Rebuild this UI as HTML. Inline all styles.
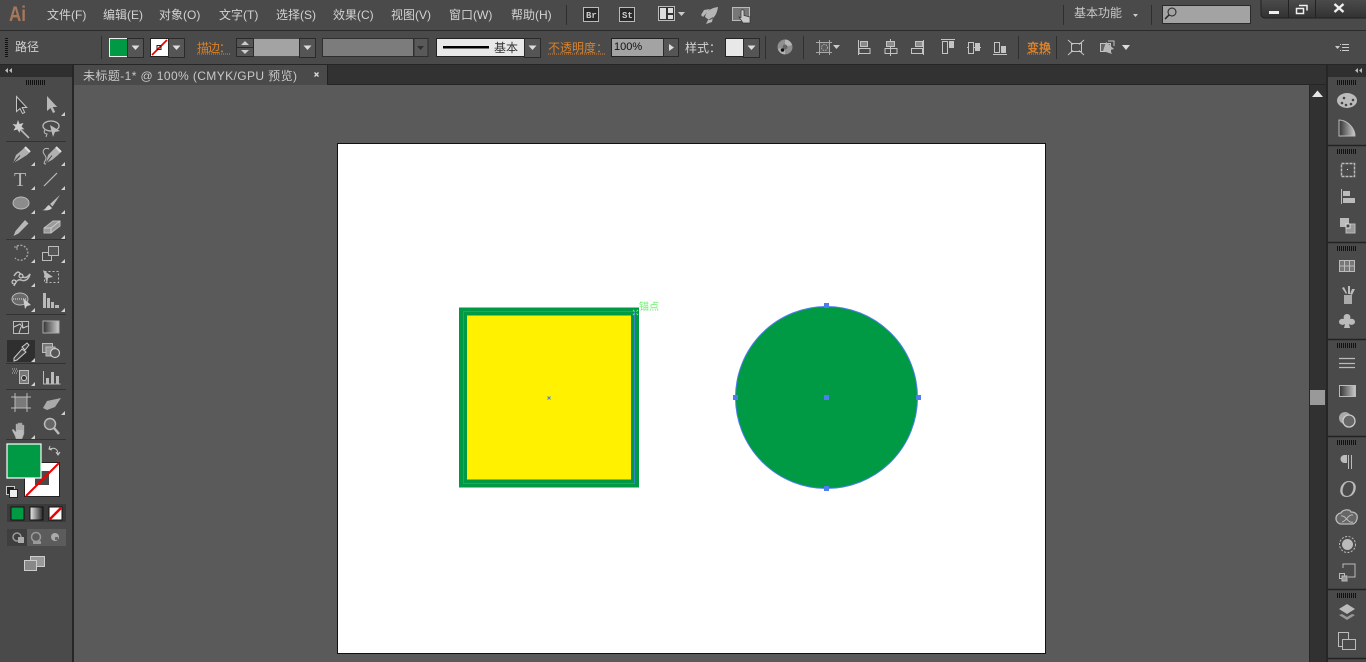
<!DOCTYPE html>
<html><head><meta charset="utf-8"><style>
html,body{margin:0;padding:0;width:1366px;height:662px;overflow:hidden;background:#5a5a5a}
svg{display:block}
text{font-family:"Liberation Sans","Noto Sans CJK SC",sans-serif;font-size:12px;fill:#d2d2d2}
</style></head><body>
<svg width="1366" height="662" viewBox="0 0 1366 662" xmlns="http://www.w3.org/2000/svg">
<defs>
<linearGradient id="gd"><stop offset="0" stop-color="#333"/><stop offset="1" stop-color="#ccc"/></linearGradient>
<linearGradient id="gd2"><stop offset="0" stop-color="#eee"/><stop offset="1" stop-color="#222"/></linearGradient>
<linearGradient id="wc" x1="0" y1="0" x2="0" y2="1"><stop offset="0" stop-color="#4c4c4c"/><stop offset="1" stop-color="#323232"/></linearGradient>
<g id="tri"><path d="M0 4L4 4L4 0Z" fill="#d0d0d0"/></g>
<g id="grip"><path d="M.5 0v5M2.500 0v5M4.500 0v5M6.500 0v5M8.500 0v5M10.500 0v5M12.500 0v5M14.500 0v5M16.500 0v5M18.500 0v5" stroke="#111" stroke-width="1"/></g>
<g id="dd"><rect width="16" height="19" fill="#555" stroke="#2a2a2a"/><path d="M4 7h8l-4 4.500z" fill="#ddd"/></g>
</defs>

<!-- base bars -->
<rect width="1366" height="30" fill="#4a4a4a"/>
<rect y="30" width="1366" height="1" fill="#2b2b2b"/>
<rect y="31" width="1366" height="33" fill="#4a4a4a"/>
<rect y="64" width="1366" height="1" fill="#262626"/>
<rect y="65" width="1366" height="20" fill="#323232"/>
<rect x="73" y="84" width="1255" height="1" fill="#262626"/>
<rect x="73" y="85" width="1237" height="577" fill="#5a5a5a"/>

<!-- menu -->
<text x="9" y="21" textLength="17" lengthAdjust="spacingAndGlyphs" style="font-size:21px;font-weight:bold;fill:#a9785a">Ai</text>
<text x="47" y="19">文件(F)</text>
<text x="103" y="19">编辑(E)</text>
<text x="159" y="19">对象(O)</text>
<text x="219" y="19">文字(T)</text>
<text x="276" y="19">选择(S)</text>
<text x="333" y="19">效果(C)</text>
<text x="391" y="19">视图(V)</text>
<text x="449" y="19">窗口(W)</text>
<text x="511" y="19">帮助(H)</text>
<rect x="566" y="5" width="1" height="20" fill="#2f2f2f"/>
<rect x="583.500" y="7.500" width="15" height="14" fill="#2a2a2a" stroke="#bbb"/>
<text x="586" y="18" style="font-size:9px;font-weight:bold;font-family:'Liberation Mono',monospace;fill:#ccc">Br</text>
<rect x="619.500" y="7.500" width="15" height="14" fill="#2a2a2a" stroke="#bbb"/>
<text x="622" y="18" style="font-size:9px;font-weight:bold;font-family:'Liberation Mono',monospace;fill:#ccc">St</text>
<rect x="658.500" y="6.500" width="16" height="14" fill="#333" stroke="#bbb"/>
<path d="M660 8h6v11h-6zM668 8h5v5h-5zM668 15h5v4h-5z" fill="#ddd"/>
<path d="M678 12h7l-3.500 4z" fill="#ccc"/>
<path d="M718 7C710 8 706 12 705 17L709 20C714 19 717 14 718 7ZM704 10L710 9L703 17L701 15ZM713 17L712 22L706 24L708 20Z" fill="#b5b5b5"/>
<rect x="732.500" y="7.500" width="17" height="13" fill="#777" stroke="#bbb"/>
<path d="M741 10.500q1.500-1.500 3 0v5l6 1.500v6h-7l-4-6 2 .5z" fill="#c8c8c8" stroke="#333" stroke-width=".7"/>
<rect x="1063" y="5" width="1" height="20" fill="#2f2f2f"/>
<text x="1074" y="17" style="fill:#c8c8c8">基本功能</text>
<path d="M1133 14h5l-2.500 3z" fill="#ccc"/>
<rect x="1151" y="5" width="1" height="20" fill="#2f2f2f"/>
<rect x="1162.500" y="5.500" width="88" height="18" fill="#a3a3a3" stroke="#2a2a2a"/>
<circle cx="1172" cy="12" r="4" fill="none" stroke="#222"/><path d="M1169 15l-4 4" stroke="#222" stroke-width="1.400"/>
<path d="M1261 -1h106v19h-101q-5 0-5-4z" fill="url(#wc)" stroke="#222"/>
<path d="M1288.500 0v18M1315.500 0v18" stroke="#222"/>
<rect x="1269" y="11" width="10" height="3" fill="#eee"/>
<rect x="1296.500" y="8.500" width="7" height="5" fill="none" stroke="#eee" stroke-width="1.500"/>
<path d="M1299 5.500h8v5" fill="none" stroke="#eee" stroke-width="1.500"/>
<path d="M1334.500 4l9 8M1343.500 4l-9 8" stroke="#eee" stroke-width="2.400"/>

<!-- control bar -->
<g fill="#111"><rect x="5" y="38" width="3" height="1"/><rect x="5" y="40" width="3" height="1"/><rect x="5" y="42" width="3" height="1"/><rect x="5" y="44" width="3" height="1"/><rect x="5" y="46" width="3" height="1"/><rect x="5" y="48" width="3" height="1"/><rect x="5" y="50" width="3" height="1"/><rect x="5" y="52" width="3" height="1"/><rect x="5" y="54" width="3" height="1"/><rect x="5" y="56" width="3" height="1"/></g>
<text x="15" y="51" style="fill:#cfcfcf">路径</text>
<rect x="101" y="36" width="1" height="23" fill="#2f2f2f"/>
<rect x="109.500" y="38.500" width="18" height="18" fill="#009a44" stroke="#eee"/>
<use href="#dd" x="127.500" y="38.500"/>
<rect x="150.500" y="38.500" width="18" height="18" fill="#fff" stroke="#222"/>
<path d="M152 55L167 40" stroke="#e00" stroke-width="1.800"/><rect x="157" y="45.500" width="4" height="4" fill="none" stroke="#222"/>
<use href="#dd" x="168.500" y="38.500"/>
<text x="197" y="52" textLength="34" style="fill:#d9822b">描边：</text>
<path d="M197 54h33" stroke="#d9822b" stroke-dasharray="1 1"/>
<rect x="236.500" y="38.500" width="17" height="18" fill="#555" stroke="#2a2a2a"/>
<path d="M236 47.500h17" stroke="#2a2a2a"/>
<path d="M241 45l4-4 4 4zM241 50h8l-4 4z" fill="#ccc"/>
<rect x="254" y="39" width="46" height="17" fill="#a3a3a3"/>
<use href="#dd" x="299.500" y="38.500"/>
<rect x="322.500" y="38.500" width="91" height="18" fill="#7c7c7c" stroke="#2f2f2f"/>
<rect x="414" y="38.500" width="14" height="18" fill="#595959" stroke="#2f2f2f"/>
<path d="M417 46h7l-3.500 4z" fill="#2f2f2f"/>
<rect x="436.500" y="38.500" width="88" height="18" fill="#e8e8e8" stroke="#222"/>
<rect x="443" y="46" width="46" height="2.500" fill="#000"/>
<text x="494" y="52" style="fill:#333">基本</text>
<use href="#dd" x="524.500" y="38.500"/>
<text x="548" y="52" textLength="60" style="fill:#d9822b">不透明度：</text>
<path d="M548 54h57" stroke="#d9822b" stroke-dasharray="1 1"/>
<rect x="611.500" y="38.500" width="52" height="18" fill="#a3a3a3" stroke="#222"/>
<text x="614" y="50" style="fill:#111;font-size:11px">100%</text>
<rect x="663.500" y="38.500" width="15" height="18" fill="#555" stroke="#2a2a2a"/>
<path d="M669 44v7l5-3.500z" fill="#ddd"/>
<text x="685" y="52" textLength="36">样式：</text>
<rect x="725.500" y="38.500" width="18" height="18" fill="#e8e8e8" stroke="#222"/>
<use href="#dd" x="743.500" y="38.500"/>
<rect x="765" y="36" width="1" height="23" fill="#2f2f2f"/>
<circle cx="785" cy="47" r="7.500" fill="#8f8f8f"/><path d="M785 47L785 39.500A7.500 7.500 0 0 1 792 45ZM785 47L778 49A7.500 7.500 0 0 0 785 54.500Z" fill="#b5b5b5"/><circle cx="785" cy="47" r="2.500" fill="#666"/><circle cx="782.500" cy="50" r="1.800" fill="#111"/>
<rect x="803" y="36" width="1" height="23" fill="#2f2f2f"/>
<g fill="none" stroke="#a8a8a8"><rect x="819.500" y="42.500" width="10" height="10" fill="#5a5a5a"/><path d="M816 42.500h5M828 42.500h4M816 52.500h5M828 52.500h4M819.500 40v5M829.500 40v5M819.500 50v5M829.500 50v5"/><circle cx="824.500" cy="47.500" r="3" stroke-dasharray="1.500 1"/></g>
<path d="M833 45h7l-3.500 4z" fill="#ccc"/>
<g fill="none" stroke="#c4c4c4">
<path d="M858.500 40v15M859 48.500h11v5h-11z"/><rect x="860.500" y="41.500" width="7" height="5" fill="#8a8a8a"/>
<path d="M890.500 39v17"/><rect x="886.500" y="41.500" width="8" height="5" fill="#8a8a8a"/><rect x="885" y="48.500" width="12" height="5" fill="#4a4a4a"/><path d="M890.500 48v6"/>
<path d="M923.500 40v15M911.500 48.500h11v5h-11z"/><rect x="915.500" y="41.500" width="7" height="5" fill="#8a8a8a"/>
<path d="M941 39.500h14M942.500 41.500h5v12h-5z"/><rect x="949" y="41" width="5" height="7" fill="#c4c4c4" stroke="none"/>
<path d="M967 47.500h14"/><rect x="968.500" y="42.500" width="5" height="11" fill="#4a4a4a"/><rect x="975" y="43" width="5" height="8" fill="#c4c4c4" stroke="none"/>
<path d="M993 54.500h14M994.500 42.500h5v10h-5z"/><rect x="1001" y="46" width="5" height="7" fill="#c4c4c4" stroke="none"/>
</g>
<rect x="1018" y="36" width="1" height="23" fill="#2f2f2f"/>
<text x="1027" y="52" style="fill:#d9822b;font-weight:bold">变换</text>
<path d="M1027 54h24" stroke="#d9822b" stroke-dasharray="1 1"/>
<rect x="1056" y="36" width="1" height="23" fill="#2f2f2f"/>
<g fill="none" stroke="#c4c4c4"><rect x="1071.500" y="43.500" width="10" height="8"/><path d="M1068 40l5 4.500M1084 40l-5 4.500M1068 55l5-4.500M1084 55l-5-4.500"/></g>
<g fill="none" stroke="#c4c4c4"><rect x="1100.500" y="43.500" width="10" height="8" fill="#666"/><path d="M1108 41h6v5"/></g>
<path d="M1106 42l8 7-4 1 2 4-9-3z" fill="#b8b8b8"/>
<path d="M1122 45h8l-4 5z" fill="#ddd"/>
<path d="M1335 46h5l-2.500 3z" fill="#ccc"/><path d="M1342 44.500h7M1342 47.500h7M1342 50.500h7M1340 44.500h1M1340 50.500h1" stroke="#ccc"/>

<!-- tab -->
<rect x="0" y="65" width="72" height="597" fill="#4a4a4a"/>
<rect x="0" y="65" width="72" height="12" fill="#2f2f2f"/>
<rect x="72" y="65" width="2" height="597" fill="#262626"/>
<path d="M8 68v5l-3-2.500zM12 68v5l-3-2.500z" fill="#bbb"/>
<rect x="74" y="65" width="253" height="20" fill="#4a4a4a"/>
<rect x="327" y="65" width="1" height="19" fill="#222"/>
<text x="83" y="80" textLength="214" style="fill:#c8c8c8;font-size:12px">未标题-1* @ 100% (CMYK/GPU 预览)</text>
<path d="M314.500 72.500l4 4M318.500 72.500l-4 4" stroke="#ddd" stroke-width="1.300"/>
<use href="#grip" x="26" y="80"/>

<!-- left tools -->
<g>
<path d="M16.500 96.500v15l3.500-3 2.500 5 2.200-1-2.500-5h4.500z" fill="#3a3a3a" stroke="#c4c4c4"/>
<path d="M47 96v15l3.500-3 2.500 5 2.200-1-2.500-5h4.500z" fill="#b8b8b8"/>
<use href="#tri" x="61" y="112"/>
<path d="M19 128l10 10" stroke="#bbb" stroke-width="1.600"/><path d="M18 120l1.500 4 4-1-2 3.500 3 3-4-.5-1 4-2-3.500-4 1 2-3.500-3-3 4 .5z" fill="#ccc"/>
<ellipse cx="51" cy="126" rx="8" ry="5" fill="none" stroke="#bbb" stroke-width="1.300"/><path d="M50 125l10 6-5 1-2 5z" fill="#bbb"/><path d="M45 130c-2 2 0 4 2 4l-1 3" fill="none" stroke="#bbb"/>
<rect x="6" y="141" width="60" height="1" fill="#333"/>
<path d="M25 147L30 152L27 155L19 160L13 163L16 155L22 150Z" fill="#b0b0b0"/><path d="M13.500 162.500L20 155.500" stroke="#444"/><path d="M25 147L30 152" stroke="#ddd" stroke-width="2"/><use href="#tri" x="31" y="162"/>
<path d="M56 147L61 152L58 155L52 160L46 163L48 155L53 150Z" fill="#b0b0b0"/><path d="M46.500 162.500L52 155.500" stroke="#444"/><path d="M56 147L61 152" stroke="#ddd" stroke-width="2"/><path d="M49 149c-5-2-7 2-5 5s3 4 1 7 0 3 1 3" fill="none" stroke="#bbb"/><use href="#tri" x="61" y="162"/>
<text x="14" y="186" style="font-family:'Liberation Serif',serif;font-size:20px;fill:#b8b8b8">T</text><use href="#tri" x="31" y="186"/>
<path d="M44 186l13-13" stroke="#bbb" stroke-width="1.200"/><use href="#tri" x="61" y="186"/>
<ellipse cx="21" cy="203" rx="8" ry="6" fill="#8c8c8c" stroke="#bbb"/><use href="#tri" x="31" y="210"/>
<path d="M60 195l-10 9 2.500 2.500z" fill="#bbb"/><path d="M42 210c4 0 4-4 7-5l3 3c-1 2-6 3-10 2z" fill="#ccc"/><use href="#tri" x="61" y="210"/>
<path d="M25 220l3.500 3.500-10 10-5 2.500 2-5z" fill="#b8b8b8"/><use href="#tri" x="31" y="235"/>
<path d="M44 228l9-7h7v5l-9 7h-7z" fill="#9a9a9a" stroke="#bbb"/><path d="M44 228h7v5M51 228l9-7" fill="none" stroke="#ccc"/><use href="#tri" x="61" y="235"/>
<rect x="6" y="239" width="60" height="1" fill="#333"/>
<path d="M17 246a7.500 7.500 0 1 1-2 12" fill="none" stroke="#aaa" stroke-dasharray="2 1.500" stroke-width="1.300"/><path d="M14 247l3 0 0 3" stroke="#aaa" fill="none"/><use href="#tri" x="31" y="259"/>
<rect x="42.500" y="252.500" width="9" height="8" fill="none" stroke="#bbb"/><rect x="48.500" y="246.500" width="10" height="9" fill="#555" stroke="#bbb"/><use href="#tri" x="61" y="259"/>
<path d="M14 276c3-5 5-5 7-1 3 4 6 3 9-1-1 5-5 8-9 6-3-1-5 1-7 6" fill="none" stroke="#bbb" stroke-width="1.500"/><circle cx="14" cy="282" r="2" fill="#555" stroke="#ddd"/><circle cx="21" cy="276" r="2" fill="#555" stroke="#ddd"/><use href="#tri" x="31" y="283"/>
<rect x="44.500" y="271.500" width="14" height="11" fill="none" stroke="#bbb" stroke-dasharray="2 2"/><path d="M43 270l10 7-5 1-1 6z" fill="#bbb"/>
<ellipse cx="20" cy="299" rx="8" ry="6" fill="#6a6a6a" stroke="#bbb"/><path d="M13 299h14" stroke="#ddd" stroke-dasharray="1 1"/><path d="M23 298l8 7-4 1-2 3z" fill="#ccc"/><use href="#tri" x="31" y="308"/>
<path d="M43 293h3v15h-3zM47 298h3v10h-3zM51 302h3v6h-3zM55 305h4v3h-4z" fill="#b8b8b8"/><use href="#tri" x="61" y="308"/>
<rect x="6" y="314" width="60" height="1" fill="#333"/>
<rect x="13.500" y="321.500" width="15" height="12" fill="#444" stroke="#bbb"/><path d="M14 327l6-3 3 4 5-2M19 333l2-6M22 322l1 6" stroke="#ccc" fill="none"/>
<rect x="43" y="321" width="16" height="12" fill="url(#gd)" stroke="#aaa"/>
<rect x="7" y="340" width="28" height="22" fill="#2f2f2f"/>
<path d="M14 358l8-9 4 3-9 8-3 1zM22 347l5-4 2 2-4 5z" fill="#444" stroke="#ccc"/><use href="#tri" x="31" y="358"/>
<rect x="42.500" y="343.500" width="10" height="9" fill="#777" stroke="#bbb"/><rect x="46" y="347" width="9" height="9" fill="#999" stroke="#bbb"/><circle cx="55" cy="353" r="4.500" fill="#555" stroke="#ccc" stroke-width="1.200"/>
<rect x="6" y="363" width="60" height="1" fill="#333"/>
<path d="M12 369h5M13 371h6M12 373h5" stroke="#bbb" stroke-dasharray="1 1"/><rect x="19.500" y="370.500" width="9" height="13" fill="#777" stroke="#bbb"/><circle cx="24" cy="378" r="2.500" fill="#333" stroke="#ccc"/><use href="#tri" x="31" y="382"/>
<path d="M43.500 371v13h17" fill="none" stroke="#bbb"/><path d="M46 378h3v6h-3zM51 372h3v12h-3zM56 376h3v8h-3z" fill="#bbb"/>
<rect x="6" y="389" width="60" height="1" fill="#333"/>
<rect x="15" y="397" width="12" height="11" fill="#7a7a7a" stroke="#bbb"/><path d="M11 397h4M27 397h4M11 408h4M27 408h4M15 393v4M27 393v4M15 408v4M27 408v4" stroke="#bbb"/>
<path d="M43 408l4-7 14-3-6 9-8 3z" fill="#aaa"/><use href="#tri" x="61" y="411"/>
<path d="M15 436l-3-6 1-1 3 3v-8h2v6-7h2v7-7h2v7-5h2v9l-2 5h-6z" fill="#bbb" stroke="#888" stroke-width=".5"/><use href="#tri" x="31" y="435"/>
<circle cx="50" cy="424" r="5.500" fill="#666" stroke="#bbb" stroke-width="1.500"/><path d="M54 428l5 6" stroke="#bbb" stroke-width="2.500"/>
<rect x="6" y="439" width="60" height="1" fill="#333"/>
</g>
<!-- colours -->
<rect x="24.500" y="462.500" width="35" height="34" fill="#fff" stroke="#222"/>
<rect x="35" y="471" width="14" height="14" fill="#4a4a4a"/>
<path d="M26 496L59 463" stroke="#e00" stroke-width="2"/>
<rect x="7" y="444" width="34" height="34" fill="#009a44" stroke="#fff" stroke-width="1.200"/>
<path d="M50 446l-1 3 3 1M50 449c4-2 8 0 8 5M56 452l2 3 2-3" fill="none" stroke="#ccc"/>
<rect x="6.500" y="486.500" width="8" height="8" fill="#222" stroke="#ccc"/><rect x="9.500" y="489.500" width="8" height="8" fill="#eee" stroke="#222"/>
<rect x="7" y="504" width="59" height="18" fill="#3a3a3a"/>
<rect x="11" y="507" width="13" height="13" fill="#009a44" stroke="#111"/>
<rect x="30" y="507" width="13" height="13" fill="url(#gd2)" stroke="#111"/>
<rect x="49" y="507" width="13" height="13" fill="#fff" stroke="#111"/><path d="M50 519L61 508" stroke="#e00" stroke-width="2.500"/>
<rect x="7" y="529" width="59" height="17" fill="#5c5c5c"/><rect x="7" y="529" width="20" height="17" fill="#3e3e3e"/>
<g><circle cx="17" cy="537" r="4" fill="none" stroke="#999" stroke-width="1.500"/><rect x="18" y="537" width="6" height="6" fill="#aaa"/><circle cx="36" cy="537" r="4.500" fill="none" stroke="#999" stroke-width="1.500"/><path d="M33 541h8v3h-8z" fill="#999"/><circle cx="55" cy="537" r="4" fill="#aaa"/><rect x="55" y="537" width="3" height="3" fill="#666"/></g>
<rect x="30.500" y="556.500" width="14" height="10" fill="#999" stroke="#ccc"/><rect x="24.500" y="560.500" width="12" height="10" fill="#888" stroke="#ccc"/>

<!-- scrollbar -->
<rect x="1309.500" y="85" width="16.500" height="577" fill="#313131"/>
<path d="M1309.500 85v577M1326.500 85v577" stroke="#262626"/>
<path d="M1312 97l5.500-6.500 5.500 6.500z" fill="#e6e6e6"/>
<rect x="1310" y="390" width="15" height="15" fill="#999"/>

<!-- right panel -->
<rect x="1326" y="65" width="2" height="597" fill="#262626"/>
<rect x="1328" y="65" width="38" height="597" fill="#4a4a4a"/>
<rect x="1328" y="65" width="38" height="12" fill="#2f2f2f"/>
<path d="M1358 68v5l-3-2.500zM1362 68v5l-3-2.500z" fill="#bbb"/>
<path d="M1328 145.500h38M1328 242.500h38M1328 339.500h38M1328 436.500h38M1328 589.500h38M1328 658.500h38" stroke="#222" stroke-width="1.500"/>
<use href="#grip" x="1337" y="80"/><use href="#grip" x="1337" y="149"/><use href="#grip" x="1337" y="246"/><use href="#grip" x="1337" y="343"/><use href="#grip" x="1337" y="440"/><use href="#grip" x="1337" y="593"/>
<ellipse cx="1347" cy="100.500" rx="10" ry="7.500" fill="#bbb"/><circle cx="1342" cy="103" r="1.300" fill="#444"/><circle cx="1346" cy="105" r="1.300" fill="#444"/><circle cx="1351" cy="104" r="1.300" fill="#444"/><circle cx="1353" cy="100" r="1.300" fill="#444"/><circle cx="1344" cy="98" r="1.300" fill="#444"/>
<path d="M1339 120c8 0 16 8 16 16h-16z" fill="url(#gd)" stroke="#bbb"/>
<rect x="1341.500" y="163.500" width="13" height="13" fill="none" stroke="#bbb" stroke-width="1.500" stroke-dasharray="3 1"/><rect x="1347" y="169" width="1" height="1" fill="#ddd"/>
<path d="M1341.500 189v15" stroke="#bbb"/><rect x="1343" y="191" width="7" height="5" fill="#bbb"/><rect x="1343" y="198" width="12" height="5" fill="#bbb"/>
<rect x="1340" y="218" width="9" height="9" fill="#bbb"/><rect x="1346" y="224" width="9" height="9" fill="#999" stroke="#bbb"/><rect x="1346" y="224" width="4" height="4" fill="#444" stroke="#ddd"/>
<rect x="1339.500" y="260.500" width="15" height="11" fill="#777" stroke="#bbb"/><path d="M1344.500 261v10M1349.500 261v10M1340 266h14" stroke="#bbb"/>
<rect x="1344" y="295" width="8" height="9" fill="#aaa"/><path d="M1346 294l-4-6 2-1 3 6zM1348 294l0-8h2v8zM1350 294l2-5 3 0-3 6z" fill="#bbb"/>
<path d="M1347 314c3 0 4 3 3 5 3-1 5 1 5 3s-3 4-6 2l1 4h-6l1-4c-3 2-6 0-6-2s2-4 5-3c-1-2 0-5 3-5z" fill="#bbb"/>
<path d="M1339 358.500h16M1339 363.500h16M1339 367.500h16" stroke="#bbb" stroke-width="1.300"/>
<rect x="1339.500" y="385.500" width="16" height="11" fill="url(#gd)" stroke="#bbb"/>
<circle cx="1345" cy="418" r="6" fill="#aaa"/><circle cx="1349" cy="421" r="6" fill="#666" stroke="#ccc" stroke-width="1.300"/>
<path d="M1351.500 455h-7a4 4 0 0 0 0 8h2.500v-8z" fill="#bbb"/><path d="M1348.500 455v14M1351.500 455v14" stroke="#bbb"/>
<text x="1339" y="497" style="font-family:'Liberation Serif',serif;font-size:24px;font-style:italic;fill:#bbb">O</text>
<path d="M1342 524a5.500 5.500 0 0 1-1-11c2-4 9-4 10-1 5 0 7 3 6 7s-3 5-5 5z" fill="#666" stroke="#bbb" stroke-width="1.300"/><path d="M1342 522c5-1 6-8 11-7M1341 516c5-1 7 8 12 6" fill="none" stroke="#bbb"/>
<circle cx="1347.500" cy="544.500" r="5.500" fill="#bbb"/><circle cx="1347.500" cy="544.500" r="8" fill="none" stroke="#bbb" stroke-dasharray="2 1.500"/>
<path d="M1343 568v-4h12v13h-7" fill="none" stroke="#bbb"/><rect x="1339.500" y="573.500" width="5" height="5" fill="none" stroke="#bbb"/><rect x="1342" y="576" width="5" height="5" fill="#999" stroke="#bbb"/>
<path d="M1347 604l8 5-8 5-8-5z" fill="#bbb"/><path d="M1339 615l8 5 8-5-3-1-5 3-5-3z" fill="#999"/>
<rect x="1338.500" y="632.500" width="10" height="14" fill="none" stroke="#bbb"/><rect x="1342.500" y="639.500" width="13" height="10" fill="#4a4a4a" stroke="#bbb"/>

<!-- artboard -->
<rect x="337.500" y="143.500" width="708" height="510" fill="#fff" stroke="#111"/>
<!-- square -->
<rect x="459" y="307.500" width="180" height="180" fill="#009a44"/>
<rect x="467" y="315.500" width="164" height="164" fill="#fff100"/>
<rect x="463.500" y="311.500" width="171" height="172" fill="none" stroke="#4f7df0" stroke-opacity=".75"/>
<path d="M547.500 396.500l3 3M550.500 396.500l-3 3" stroke="#4f7df0"/>
<path d="M633 310l1.500 1.500M638 310l-1.500 1.500M633 315l1.500-1.500M638 315l-1.500-1.500" stroke="#7cf27c"/>
<text x="639" y="310" style="font-size:10px;fill:#6ff06f">锚点</text>
<!-- circle -->
<circle cx="826.500" cy="397.500" r="91" fill="#009a44" stroke="#4f7df0"/>
<g fill="#4f7df0"><rect x="824" y="395" width="5" height="5"/><rect x="824" y="303" width="5" height="5"/><rect x="824" y="486" width="5" height="5"/><rect x="733" y="395" width="5" height="5"/><rect x="916" y="395" width="5" height="5"/></g>
</svg>
</body></html>
